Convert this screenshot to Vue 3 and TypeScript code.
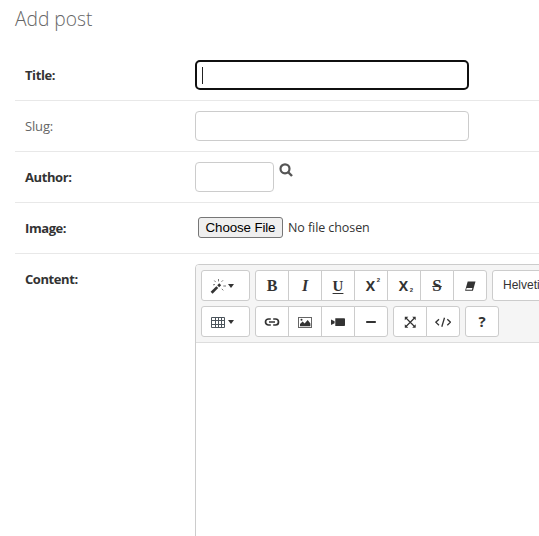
<script setup lang="ts">
interface Tool {
  name: string
  label?: string
  sub?: string
  wide?: boolean
}
const firstRow: Tool[][] = [
  [{ name: 'wand', wide: true }],
  [
    { name: 'bold', label: 'B' },
    { name: 'italic', label: 'I' },
    { name: 'underline', label: 'U' },
    { name: 'superscript', label: 'X', sub: '2' },
    { name: 'subscript', label: 'X', sub: '2' },
    { name: 'strike', label: 'S' },
    { name: 'eraser' },
  ],
  [{ name: 'font', label: 'Helvetica' }],
]
const secondRow: Tool[][] = [
  [{ name: 'table', wide: true }],
  [{ name: 'link' }, { name: 'picture' }, { name: 'video' }, { name: 'rule' }],
  [{ name: 'fullscreen' }, { name: 'code' }],
  [{ name: 'help', label: '?' }],
]
const rows: Tool[][][] = [firstRow, secondRow]
</script>

<template>
  <main class="page">
    <h1>Add post</h1>
    <form class="form" @submit.prevent>
      <div class="row">
        <label class="label required">Title:</label>
        <div class="input focused"><span class="caret"></span></div>
      </div>
      <div class="row">
        <label class="label">Slug:</label>
        <div class="input"></div>
      </div>
      <div class="row">
        <label class="label required">Author:</label>
        <div class="input short"></div>
        <svg class="search" width="14" height="14" viewBox="0 0 14 14">
          <circle cx="6" cy="5.8" r="4.5" fill="none" stroke="#555" stroke-width="2.2" />
          <path d="M9 9l4 4" stroke="#555" stroke-width="2.4" />
        </svg>
      </div>
      <div class="row">
        <label class="label required">Image:</label>
        <div class="file">
          <button type="button" class="choose">Choose File</button>
          <span class="nofile">No file chosen</span>
        </div>
      </div>
      <div class="row content">
        <label class="label required">Content:</label>
        <div class="editor">
          <div class="toolbar">
            <div v-for="(row, r) in rows" :key="r" class="tools">
              <div v-for="(group, g) in row" :key="g" class="group">
                <button
                  v-for="tool in group"
                  :key="tool.name"
                  type="button"
                  class="tool"
                  :class="[tool.name, { wide: tool.wide }]"
                >
                  <span v-if="tool.label" class="glyph">{{ tool.label }}<small v-if="tool.sub">{{ tool.sub }}</small></span>
                  <svg v-else width="16" height="16" viewBox="0 0 16 16" fill="none" stroke="#333">
                    <g v-if="tool.name === 'wand'">
                      <path d="M1.6 14.8L7.3 9.1" stroke-width="2.7" />
                      <path d="M8.2 8.2L10.2 6.2" stroke-width="2.7" />
                      <path d="M4.3 2.5l1.4 1.6M8.5 1v2.4M13 2.3l-1.5 1.5M13.3 8h2.7M11.8 10.8l1.5 1.6M3 6.9l2-.4" stroke="#777" />
                    </g>
                    <g v-else-if="tool.name === 'eraser'">
                      <path d="M5.7 3.5h7.8L10.9 12.7H3.1z" fill="#333" stroke="none" />
                      <path d="M4.6 10h5.8l-.5 1.7H4.1z" fill="#fff" stroke="none" />
                    </g>
                    <path v-else-if="tool.name === 'table'" d="M1.5 3.5h13v10h-13zM1.5 6.5h13M1.5 10.5h13M5.5 3.5v10M8.5 3.5v10M11.5 3.5v10" stroke="#4c555c" />
                    <path v-else-if="tool.name === 'link'" d="M6.8 11H4.5a3 3 0 0 1 0-6h2.3M9.2 5h2.3a3 3 0 0 1 0 6H9.2M5 8h6" stroke-width="1.7" />
                    <g v-else-if="tool.name === 'picture'">
                      <rect x="1.5" y="3.5" width="13" height="10" stroke="#666" />
                      <path d="M3 12.3V10l2.6-2.6 2 2 3.1-3.5 2.7 3.7v2.7z" fill="#333" stroke="none" />
                      <circle cx="4.5" cy="5.8" r="1" fill="#333" stroke="none" />
                    </g>
                    <path v-else-if="tool.name === 'video'" d="M5.3 4.2h8.9a.8.8 0 0 1 .8.8v6.2a.8.8 0 0 1-.8.8H5.3zM1 5.5l3.6 1.7v2L1 10.9z" fill="#333" stroke="none" />
                    <path v-else-if="tool.name === 'rule'" d="M3.2 8h9.6" stroke-width="2" />
                    <g v-else-if="tool.name === 'fullscreen'">
                      <path d="M4 4l8.5 8.5M12.5 4L4 12.5" stroke-width="1.2" />
                      <path d="M2.8 2.8h3.5L2.8 6.3zM13.7 2.8v3.5l-3.5-3.5zM2.8 13.7v-3.5l3.5 3.5zM13.7 13.7h-3.5l3.5-3.5z" fill="#333" stroke="none" />
                    </g>
                    <path v-else-if="tool.name === 'code'" d="M4 5.2L.8 8.2 4 11.2M12.3 5.2l3.2 3-3.2 3M9.5 3.7L6.8 12.7" stroke-width="1.3" />
                  </svg>
                  <span v-if="tool.wide" class="arrow"></span>
                </button>
              </div>
            </div>
          </div>
        </div>
      </div>
    </form>
  </main>
</template>

<style>
html, body { overflow: hidden; background: #fff; }
</style>
<style scoped>
.page { width: 539px; height: 536px; box-sizing: border-box; padding-left: 15px; overflow: hidden; background: #fff; font: 13px "Open Sans", "Noto Sans", sans-serif; color: #333; }
h1 { margin: 0; height: 50px; box-sizing: border-box; padding-top: 6px; font-size: 19.2px; line-height: 26px; font-weight: 300; color: #666; }
.row { display: flex; box-sizing: border-box; height: 51px; padding: 10px; border-bottom: 1px solid #e8e8e8; }
.label { width: 170px; flex: none; font-size: 13px; line-height: 31px; color: #666; letter-spacing: -.15px; }
.required { font-weight: 700; color: #333; letter-spacing: -.42px; }
.input { box-sizing: border-box; width: 274px; height: 30px; border: 1px solid #ccc; border-radius: 4px; }
.focused { border: 2px solid #101010; border-radius: 5px; padding: 5px; }
.caret { display: block; width: 1px; height: 17px; background: #222; }
.short { width: 79px; }
.search { margin: 1px 0 0 5px; }
.file { display: flex; align-items: flex-start; padding: 4px 0 0 3px; }
.choose { width: 85px; height: 21px; box-sizing: border-box; padding: 0; border: 1px solid #767676; border-radius: 3px; background: #efefef; color: #000; font: 13.333px/18px "Liberation Sans", sans-serif; letter-spacing: -.12px; }
.nofile { margin-left: 5px; font-size: 12.5px; line-height: 21px; letter-spacing: -.08px; white-space: nowrap; }
.content { height: 300px; border: 0; }
.editor { flex: none; width: 700px; height: 400px; box-sizing: border-box; border: 1px solid #ccc; border-radius: 4px 4px 0 0; }
.toolbar { display: flex; flex-direction: column; gap: 5px; padding: 5px; height: 78px; box-sizing: border-box; background: #f5f5f5; border-bottom: 1px solid #ddd; border-radius: 3px 3px 0 0; }
.tools, .group { display: flex; }
.tools { gap: 5px; }
.tool { display: flex; align-items: center; justify-content: center; width: 34px; height: 31px; box-sizing: border-box; margin: 0 0 0 -1px; padding: 0; border: 1px solid #ccc; background: #fff; color: #333; font: 12px/18px "Liberation Sans", sans-serif; }
.tool:first-child { margin-left: 0; border-radius: 3px 0 0 3px; }
.tool:last-child { border-radius: 0 3px 3px 0; }
.tool:only-child { border-radius: 3px; }
.tool.wide { width: 49px; justify-content: flex-start; padding: 0 0 0 8px; gap: 2px; }
.arrow { border: 3.5px solid transparent; border-top: 4.5px solid #333; border-bottom: 0; }
.glyph { font: 700 16px/18px "Liberation Serif", serif; position: relative; }
.italic .glyph { font-style: italic; }
.underline .glyph { text-decoration: underline 1px; text-underline-offset: 2px; font-size: 15px; }
.strike .glyph { font-size: 17px; text-decoration: line-through 1px; }
.superscript .glyph, .subscript .glyph { font: 700 14px/18px "Open Sans", sans-serif; padding: 1px 1px 0 0; }
.glyph small { position: absolute; left: 11px; top: -3px; font: 700 6px/14px "Liberation Sans", sans-serif; }
.subscript .glyph small { top: 7px; }
.tool.font { width: 90px; justify-content: flex-start; padding: 0 0 2px 10px; }
.font .glyph { font: 12px/18px "Liberation Sans", sans-serif; }
.help .glyph { font: 700 15px/18px "Open Sans", sans-serif; padding-bottom: 1px; }
</style>
